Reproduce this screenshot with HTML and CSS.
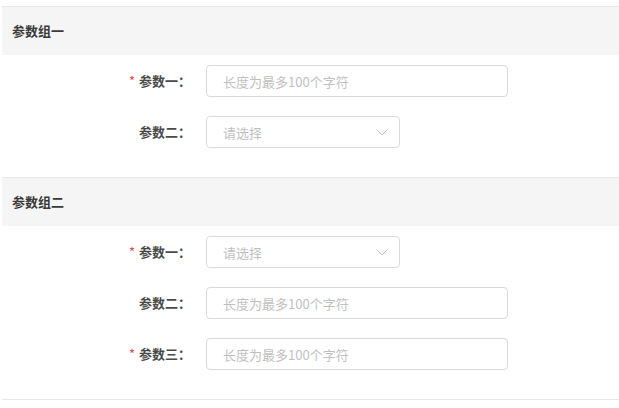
FILE: index.html
```html
<!DOCTYPE html>
<html lang="zh-CN">
<head>
<meta charset="utf-8">
<link rel="stylesheet" href="styles.css">
</head>
<body>
<div class="page">
  <section class="group">
    <div class="group-title">参数组一</div>
    <div class="group-body">
      <div class="row">
        <label class="label"><span class="req">*</span>参数一：</label>
        <div class="field input"><span class="ph">长度为最多100个字符</span></div>
      </div>
      <div class="row">
        <label class="label">参数二：</label>
        <div class="field select"><span class="ph">请选择</span>
          <svg class="chev" width="12" height="7" viewBox="0 0 12 7"><path d="M0.5 0.5 L6 6 L11.5 0.5" fill="none" stroke="#c0c0c0" stroke-width="1"/></svg>
        </div>
      </div>
    </div>
  </section>
  <section class="group">
    <div class="group-title">参数组二</div>
    <div class="group-body">
      <div class="row">
        <label class="label"><span class="req">*</span>参数一：</label>
        <div class="field select"><span class="ph">请选择</span>
          <svg class="chev" width="12" height="7" viewBox="0 0 12 7"><path d="M0.5 0.5 L6 6 L11.5 0.5" fill="none" stroke="#c0c0c0" stroke-width="1"/></svg>
        </div>
      </div>
      <div class="row">
        <label class="label">参数二：</label>
        <div class="field input"><span class="ph">长度为最多100个字符</span></div>
      </div>
      <div class="row">
        <label class="label"><span class="req">*</span>参数三：</label>
        <div class="field input"><span class="ph">长度为最多100个字符</span></div>
      </div>
    </div>
  </section>
  <div class="end-line"></div>
</div>
</body>
</html>
```
FILE: styles.css
```css
html, body {
  margin: 0;
  padding: 0;
  background: #ffffff;
}
body {
  font-family: "Noto Sans CJK SC", "Noto Sans", sans-serif;
  color: #333333;
}
.page {
  padding-top: 6px;
  margin-left: 2px;
}
.group {
  border-top: 1px solid #e8e8e8;
}
.group-title {
  height: 47px;
  padding-bottom: 1px;
  background: #f5f5f5;
  display: flex;
  align-items: center;
  padding-left: 10px;
  font-size: 13px;
  font-weight: 700;
  color: #3a3a3a;
}
.group-body {
  padding: 10px 0 10px;
  display: flex;
  flex-direction: column;
  gap: 19px;
}
.group-body .row:last-child {
  margin-bottom: 19px;
}
.row {
  display: flex;
  align-items: center;
  height: 32px;
}
.label {
  width: 189px;
  flex: none;
  text-align: right;
  font-size: 13px;
  font-weight: 700;
  color: #4a4a4a;
  margin-right: 15px;
  padding-bottom: 1px;
}
.req {
  color: #e8474b;
  font-weight: 400;
  margin-right: 4px;
  font-size: 13px;
}
.field {
  box-sizing: border-box;
  height: 32px;
  border: 1px solid #d9d9d9;
  border-radius: 4px;
  display: flex;
  align-items: center;
  padding-left: 16px;
  font-size: 13px;
}
.input {
  width: 302px;
}
.select {
  width: 194px;
  justify-content: space-between;
  padding-right: 11px;
}
.ph {
  color: #bfbfbf;
}
.chev {
  display: block;
}
.end-line {
  border-top: 1px solid #e8e8e8;
}
```
